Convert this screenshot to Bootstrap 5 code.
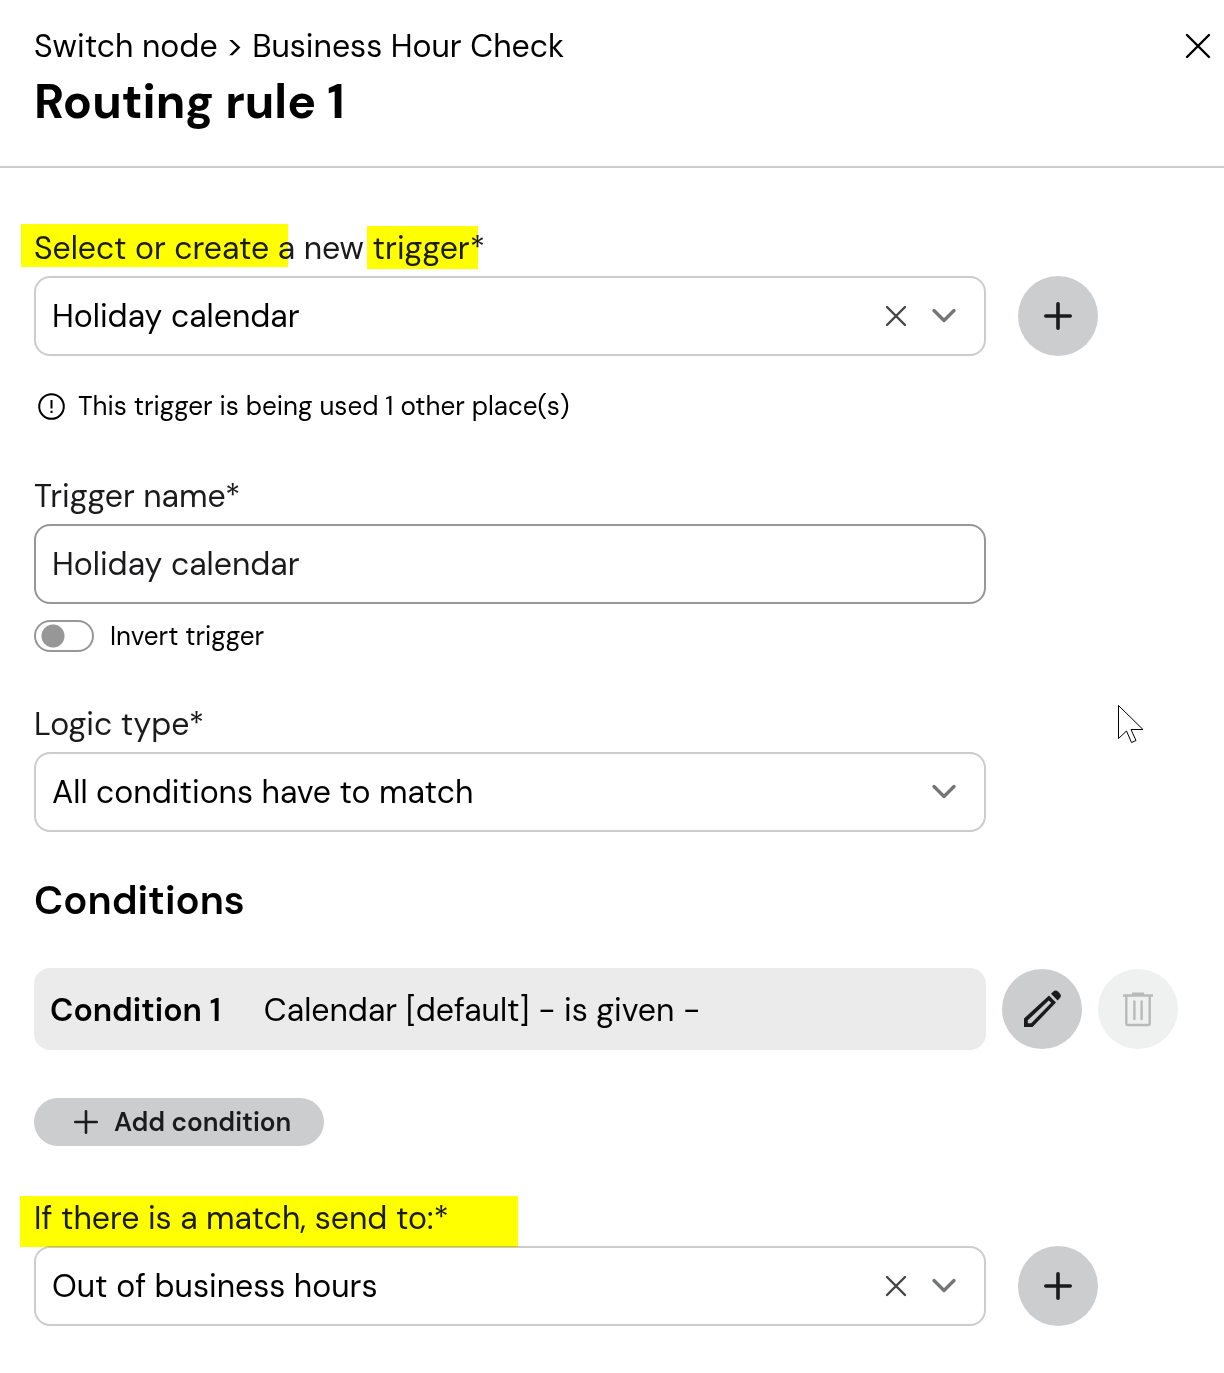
<!DOCTYPE html>
<html lang="en">
<head>
<meta charset="utf-8">
<meta name="viewport" content="width=device-width, initial-scale=1">
<title>Routing rule 1</title>
<link href="https://cdn.jsdelivr.net/npm/bootstrap@5.3.0/dist/css/bootstrap.min.css" rel="stylesheet">
<style>
  body { font-family: "DM Sans", Inter, "Open Sans", sans-serif; font-size: 32px; line-height: 40px; color: #000; }
  .panel-head { padding: 26px 8px 36px 34px; border-bottom: 2px solid #cccccd; }
  .panel-title { font-size: 48px; line-height: 56px; font-weight: 700; margin: 8px 0 0; }
  .panel-body { padding: 60px 46px 47px 34px; }
  .icon-btn { width: 36px; height: 40px; padding: 0; border: 0; background: none; display: grid; place-items: center; }
  .form-row { display: grid; grid-template-columns: minmax(0, 1fr) 192px; }
  .row-actions { padding-left: 32px; display: flex; align-items: center; }
  .row-actions.tight { padding-left: 16px; gap: 16px; }
  .field-label { display: table; position: relative; margin: 0 0 8px; color: #1b1b1d; }
  .hilite { position: absolute; background: #ff0; mix-blend-mode: multiply; }
  .hilite-a { left: -13px; top: -4px; width: 267px; height: 43px; }
  .hilite-b { left: 333px; top: -2px; width: 111px; height: 43px; }
  .hilite-c { left: -14px; top: -2px; width: 498px; height: 51px; z-index: 2; }
  .field { height: 80px; border: 2px solid #cccccd; border-radius: 16px; padding: 0 16px; font-size: 32px; line-height: 40px; color: #000; background: #fff none; }
  .field-dark { border-color: #979797; color: #1b1b1d; }
  .field-tools { position: absolute; right: 24px; top: 20px; display: flex; gap: 12px; pointer-events: none; }
  .field-tools button { pointer-events: auto; }
  .round-btn { width: 80px; height: 80px; border-radius: 50%; border: 0; padding: 0; background: #cccdcf; color: #1b1b1d; display: grid; place-items: center; }
  .round-btn:disabled { background: #eff1f1; color: #b9b9b9; }
  .hint { font-size: 26px; line-height: 32px; margin: 34px 0 54px; gap: 12px; padding-left: 3px; }
  .switch-row { margin: 16px 0 52px; padding: 0; min-height: 32px; gap: 16px; font-size: 26px; line-height: 32px; }
  .form-switch .switch-box { width: 60px; height: 32px; margin: 0; border: 2px solid #979797; border-radius: 16px; background-color: #fff; background-size: 28px 28px; background-position: 3px center; background-image: radial-gradient(circle, #979797 11px, transparent 12px); background-repeat: no-repeat; }
  .section-title { font-size: 40px; line-height: 48px; font-weight: 600; margin: 44px 0; }
  .cond { height: 82px; border-radius: 16px; background: #ebebeb; padding: 2px 16px 0; gap: 43px; white-space: nowrap; }
  .cond strong { font-weight: 600; }
  .pill-btn { height: 48px; border: 0; border-radius: 24px; background: #cccdcf; color: #1b1b1d; font-size: 26px; line-height: 32px; font-weight: 600; padding: 0 33px 0 40px; gap: 16px; margin: 48px 0 52px; }
  .pointer { position: absolute; right: 80px; top: 704px; pointer-events: none; }
  svg { display: block; flex: none; }
</style>
<script src="https://cdn.jsdelivr.net/npm/bootstrap@5.3.0/dist/js/bootstrap.bundle.min.js" defer></script>
</head>
<body class="position-relative">
<header class="panel-head d-flex justify-content-between align-items-start">
  <div>
    <div>Switch node &gt; Business Hour Check</div>
    <h1 class="panel-title">Routing rule 1</h1>
  </div>
  <button class="icon-btn" type="button" aria-label="Close">
    <svg width="28" height="28" viewBox="0 0 28 28" fill="none" stroke="#000" stroke-width="2.4" stroke-linecap="round"><path d="M3 3l22 22M25 3L3 25"/></svg>
  </button>
</header>

<form class="panel-body">
  <label class="field-label" for="trigger">Select or create a new trigger*<span class="hilite hilite-a"></span><span class="hilite hilite-b"></span></label>
  <div class="form-row">
    <div class="position-relative">
      <select class="form-select field" id="trigger"><option>Holiday calendar</option></select>
      <div class="field-tools">
        <button class="icon-btn" type="button" aria-label="Clear trigger"><svg width="22" height="22" viewBox="0 0 22 22" fill="none" stroke="#444" stroke-width="2.4" stroke-linecap="round"><path d="M2 2l18 18M20 2L2 20"/></svg></button>
        <span class="icon-btn"><svg width="28" height="16" viewBox="0 0 28 16" fill="none" stroke="#757678" stroke-width="3.4" stroke-linecap="round" stroke-linejoin="round"><path d="M4 2.500l10 10 10-10"/></svg></span>
      </div>
    </div>
    <div class="row-actions">
      <button class="round-btn" type="button" aria-label="New trigger"><svg width="30" height="30" viewBox="0 0 30 30" fill="none" stroke="currentColor" stroke-width="3.600" stroke-linecap="round"><path d="M15 2.800v24.400M2.800 15h24.400"/></svg></button>
    </div>
  </div>

  <div class="hint d-flex align-items-center">
    <svg width="29" height="29" viewBox="0 0 29 29" fill="none" stroke="#000" stroke-width="2"><circle cx="14.500" cy="14.500" r="12.300"/><path d="M14.500 8v8.500M14.500 18.800v2.200"/></svg>
    <span>This trigger is being used 1 other place(s)</span>
  </div>

  <label class="field-label" for="name">Trigger name*</label>
  <div class="form-row">
    <input class="form-control field field-dark" id="name" type="text" value="Holiday calendar">
  </div>
  <div class="switch-row form-check form-switch d-flex align-items-center">
    <input class="form-check-input switch-box float-none" type="checkbox" role="switch" id="invert">
    <label for="invert">Invert trigger</label>
  </div>

  <label class="field-label" for="logic">Logic type*</label>
  <div class="form-row">
    <div class="position-relative">
      <select class="form-select field" id="logic"><option>All conditions have to match</option></select>
      <div class="field-tools">
        <span class="icon-btn"><svg width="28" height="16" viewBox="0 0 28 16" fill="none" stroke="#757678" stroke-width="3.4" stroke-linecap="round" stroke-linejoin="round"><path d="M4 2.500l10 10 10-10"/></svg></span>
      </div>
    </div>
  </div>

  <h2 class="section-title">Conditions</h2>
  <div class="form-row">
    <div class="cond d-flex align-items-center"><strong>Condition 1</strong><span>Calendar [default] - is given -</span></div>
    <div class="row-actions tight">
      <button class="round-btn" type="button" aria-label="Edit condition"><svg width="40" height="40" viewBox="0 0 40 40" fill="currentColor"><path fill-rule="evenodd" d="M2 38v-8.500L27 6.500l7 7L10.500 38zM5.800 34.200h3.400L29.200 13.800l-2.400-2.400L5.800 31.300z"/><path d="M29 4.800l2.400-2.400q2.200-1.900 4.500 0l2 2q2 2.300 0 4.600l-2.300 2.400z"/></svg></button>
      <button class="round-btn" type="button" aria-label="Delete condition" disabled><svg width="32" height="36" viewBox="0 0 32 36" fill="none" stroke="currentColor" stroke-width="2.400"><path d="M1 4.500h30M10 2.800h12" stroke-width="2.600"/><path d="M4.300 4.500v28q0 1.500 1.500 1.500h20.400q1.500 0 1.500-1.500v-28"/><path d="M12.400 10.500v17.500M19.600 10.500v17.500" stroke-linecap="round"/></svg></button>
    </div>
  </div>

  <button class="pill-btn d-flex align-items-center" type="button">
    <svg width="24" height="24" viewBox="0 0 24 24" fill="none" stroke="currentColor" stroke-width="2.600" stroke-linecap="round"><path d="M12 1.300v21.400M1.300 12h21.400"/></svg>
    <span>Add condition</span>
  </button>

  <label class="field-label" for="target">If there is a match, send to:*<span class="hilite hilite-c"></span></label>
  <div class="form-row">
    <div class="position-relative">
      <select class="form-select field" id="target"><option>Out of business hours</option></select>
      <div class="field-tools">
        <button class="icon-btn" type="button" aria-label="Clear target"><svg width="22" height="22" viewBox="0 0 22 22" fill="none" stroke="#444" stroke-width="2.4" stroke-linecap="round"><path d="M2 2l18 18M20 2L2 20"/></svg></button>
        <span class="icon-btn"><svg width="28" height="16" viewBox="0 0 28 16" fill="none" stroke="#757678" stroke-width="3.4" stroke-linecap="round" stroke-linejoin="round"><path d="M4 2.500l10 10 10-10"/></svg></span>
      </div>
    </div>
    <div class="row-actions">
      <button class="round-btn" type="button" aria-label="New target"><svg width="30" height="30" viewBox="0 0 30 30" fill="none" stroke="currentColor" stroke-width="3.600" stroke-linecap="round"><path d="M15 2.800v24.400M2.800 15h24.400"/></svg></button>
    </div>
  </div>
</form>

<svg class="pointer" width="26" height="40" viewBox="0 0 26 40"><path d="M.5 1.500v33l8-7.500 5 11.500 4.500-2-5-11h12z" fill="#fff" stroke="#000"/></svg>
</body>
</html>
